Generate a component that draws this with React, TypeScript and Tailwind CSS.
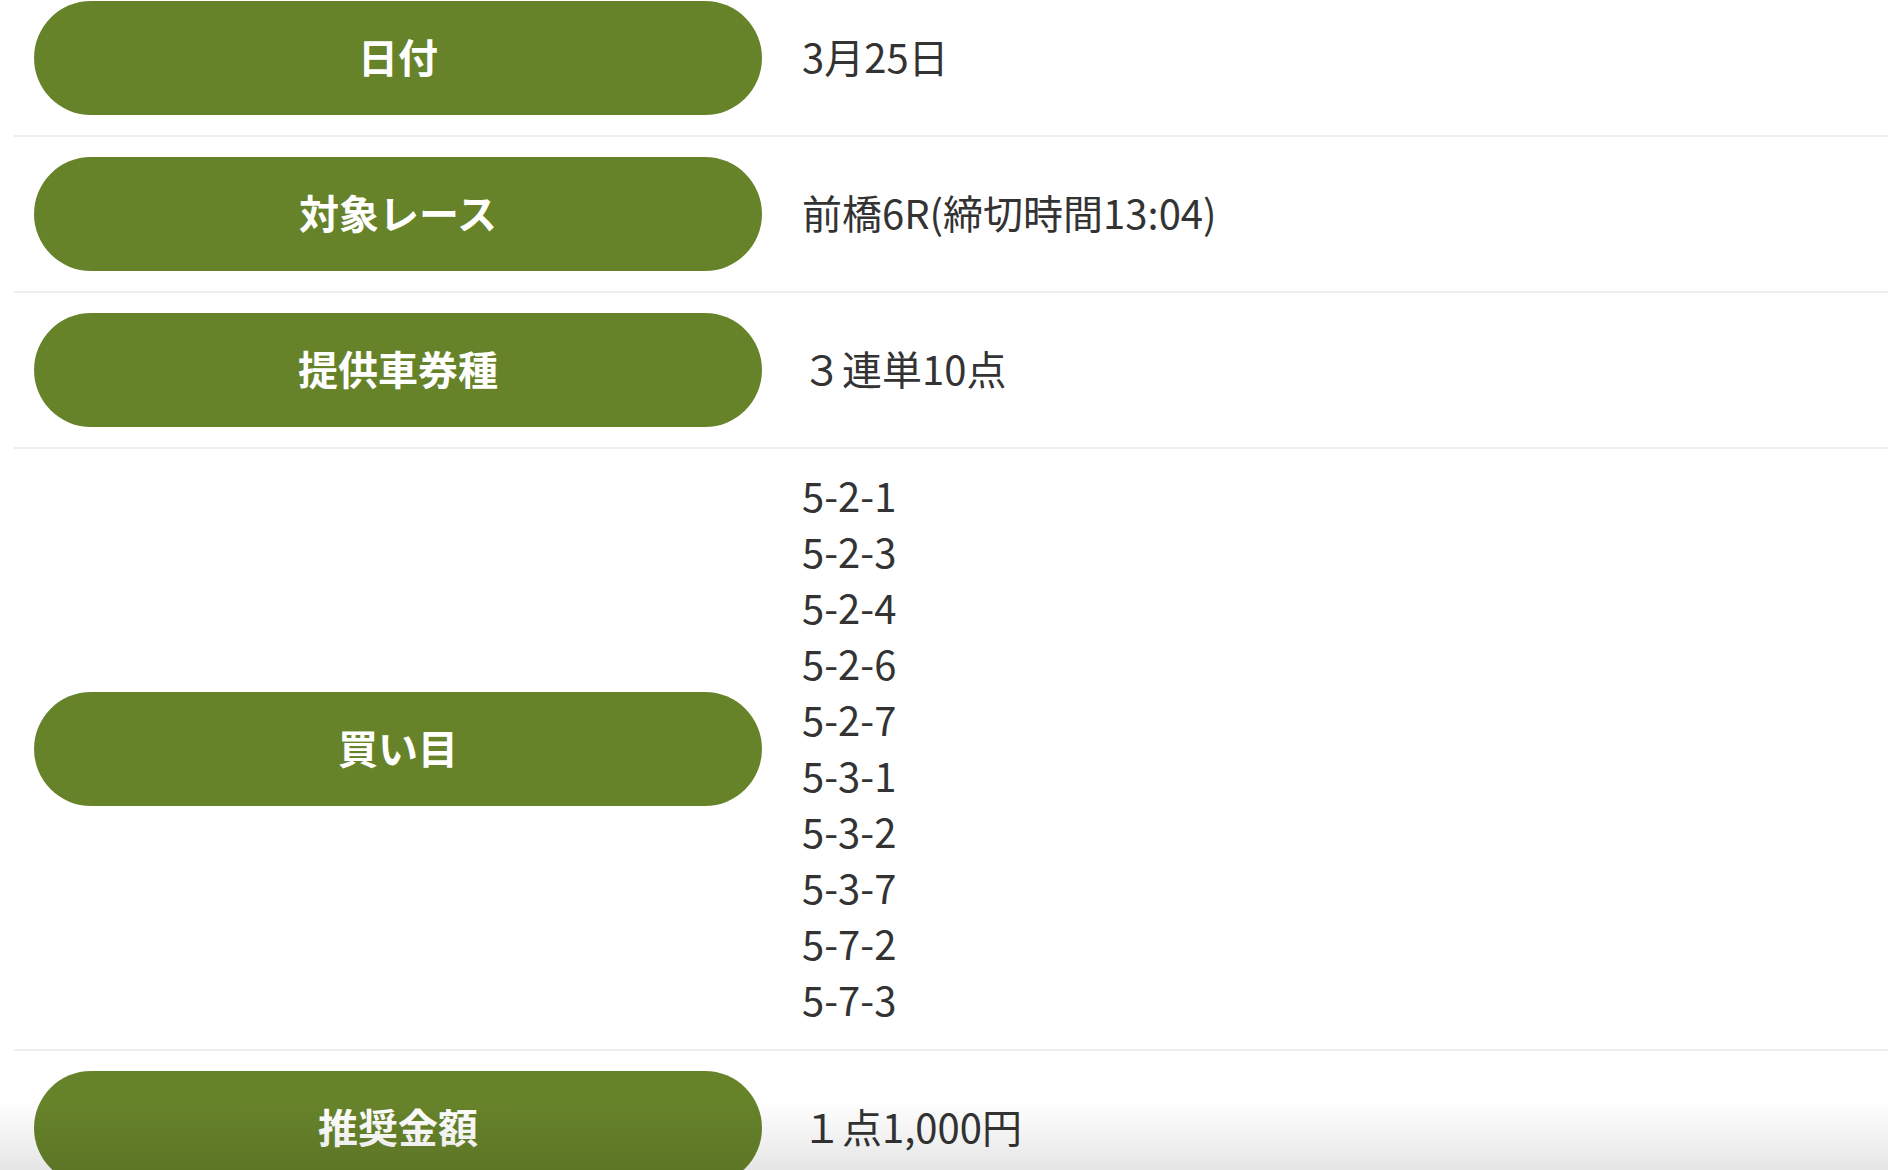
const rows: { label: string; value: string[] }[] = [
  { label: "日付", value: ["3月25日"] },
  { label: "対象レース", value: ["前橋6R(締切時間13:04)"] },
  { label: "提供車券種", value: ["３連単10点"] },
  {
    label: "買い目",
    value: ["5-2-1", "5-2-3", "5-2-4", "5-2-6", "5-2-7", "5-3-1", "5-3-2", "5-3-7", "5-7-2", "5-7-3"],
  },
  { label: "推奨金額", value: ["１点1,000円"] },
];

const Pill = ({ children }: { children: React.ReactNode }) => (
  <div className="w-[728px] rounded-full bg-[#67832a] pt-[27px] pb-[31px] text-center text-[40px] leading-[56px] font-bold text-white">
    {children}
  </div>
);

export default function App() {
  return (
    <div
      className="relative h-[1170px] overflow-hidden bg-white"
      style={{ fontFamily: '"Noto Sans CJK JP", "Noto Sans", sans-serif' }}
    >
      <div className="-mt-[19px] pl-[14px]">
        {rows.map((row, i) => (
          <div
            key={row.label}
            className={
              i < rows.length - 1
                ? "flex items-center border-b-2 border-[#eeeeee]"
                : "flex items-center"
            }
          >
            <div className="px-5 py-5">
              <Pill>{row.label}</Pill>
            </div>
            <div className="pt-[18px] pb-[22px] pl-5 text-[40px] leading-[56px] text-[#333333]">
              {row.value.map((v) => (
                <div key={v}>{v}</div>
              ))}
            </div>
          </div>
        ))}
      </div>
      <div className="pointer-events-none absolute inset-x-0 bottom-0 h-[70px] bg-gradient-to-b from-transparent to-black/10" />
    </div>
  );
}
